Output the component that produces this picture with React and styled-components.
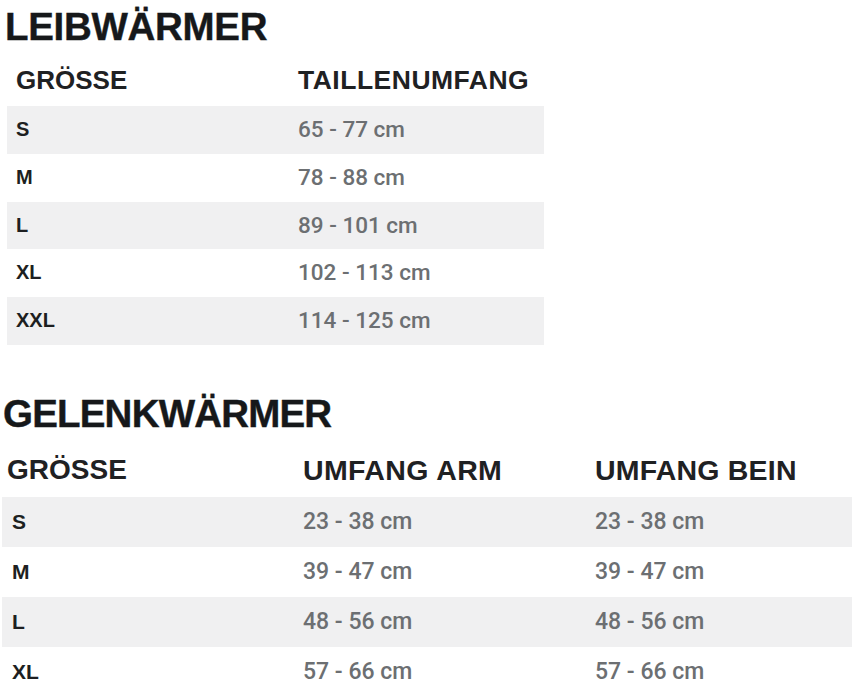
import React from 'react';
import styled, { createGlobalStyle } from 'styled-components';

const Global = createGlobalStyle`
  html, body {
    margin: 0;
    padding: 0;
    background: #fff;
  }
  body {
    font-family: "Liberation Sans", Arial, sans-serif;
    color: #1d1f21;
  }
`;

const Page = styled.div`
  width: 856px;
  height: 684px;
  overflow: hidden;
  padding-top: 8px;
  box-sizing: border-box;
`;

const Section = styled.section`
  padding-left: ${(p) => p.$left}px;
  width: ${(p) => p.$width}px;
  margin-top: ${(p) => p.$top || 0}px;
`;

const Title = styled.h2`
  margin: 0 0 0 ${(p) => p.$indent}px;
  font-size: 38.5px;
  line-height: 38px;
  font-weight: 700;
  letter-spacing: ${(p) => p.$track}px;
  color: #16181a;
  -webkit-text-stroke: 0.4px #16181a;
`;

const Grid = styled.div`
  display: grid;
  grid-template-columns: ${(p) => p.$cols};
`;

const HeadRow = styled(Grid)`
  height: ${(p) => p.$height}px;
  padding-top: ${(p) => p.$pad}px;
  box-sizing: border-box;
`;

const HeadCell = styled.div`
  font-size: ${(p) => p.$size}px;
  line-height: 30px;
  font-weight: 700;
  letter-spacing: ${(p) => p.$track || 0}px;
  color: #1f2123;
  padding-left: ${(p) => p.$pad || 0}px;
  white-space: nowrap;
`;

const Row = styled(Grid)`
  height: ${(p) => p.$height}px;
  line-height: ${(p) => p.$height}px;
  background: ${(p) => (p.$shade ? '#f0f0f1' : '#fff')};
`;

const Label = styled.div`
  font-size: ${(p) => p.$size}px;
  font-weight: 700;
  color: #1d1f21;
  padding-left: ${(p) => p.$pad}px;
`;

const Value = styled.div`
  font-family: Roboto, "Liberation Sans", sans-serif;
  font-weight: 500;
  font-size: ${(p) => p.$size}px;
  color: #6c6f72;
  white-space: nowrap;
`;

const leib = [
  ['S', '65 - 77 cm'],
  ['M', '78 - 88 cm'],
  ['L', '89 - 101 cm'],
  ['XL', '102 - 113 cm'],
  ['XXL', '114 - 125 cm'],
];

const gelenk = [
  ['S', '23 - 38 cm', '23 - 38 cm'],
  ['M', '39 - 47 cm', '39 - 47 cm'],
  ['L', '48 - 56 cm', '48 - 56 cm'],
  ['XL', '57 - 66 cm', '57 - 66 cm'],
];

export default function App() {
  const cols1 = '291px 1fr';
  const cols2 = '301px 292px 1fr';
  return (
    <Page>
      <Global />
      <Section $left={4} $width={540}>
        <Title $indent={1} $track={-0.3}>LEIBWÄRMER</Title>
        <div style={{ paddingLeft: 3 }}>
          <HeadRow $cols={cols1} $height={60} $pad={19}>
            <HeadCell $size={26} $pad={9}>GRÖSSE</HeadCell>
            <HeadCell $size={26.5} $track={0.5}>TAILLENUMFANG</HeadCell>
          </HeadRow>
          {leib.map(([size, waist], i) => (
            <Row key={size} $cols={cols1} $height={47.8} $shade={i % 2 === 0}>
              <Label $size={20} $pad={9}>{size}</Label>
              <Value $size={22.5}>{waist}</Value>
            </Row>
          ))}
        </div>
      </Section>

      <Section $left={2} $width={850} $top={50}>
        <Title $indent={1} $track={-0.8}>GELENKWÄRMER</Title>
        <HeadRow $cols={cols2} $height={64} $pad={22}>
          <HeadCell $size={28} $pad={5}>GRÖSSE</HeadCell>
          <HeadCell $size={28.5} $track={0.4}>UMFANG ARM</HeadCell>
          <HeadCell $size={28.5} $track={0.2}>UMFANG BEIN</HeadCell>
        </HeadRow>
        {gelenk.map(([size, arm, bein], i) => (
          <Row key={size} $cols={cols2} $height={50} $shade={i % 2 === 0}>
            <Label $size={21} $pad={10}>{size}</Label>
            <Value $size={23}>{arm}</Value>
            <Value $size={23}>{bein}</Value>
          </Row>
        ))}
      </Section>
    </Page>
  );
}
